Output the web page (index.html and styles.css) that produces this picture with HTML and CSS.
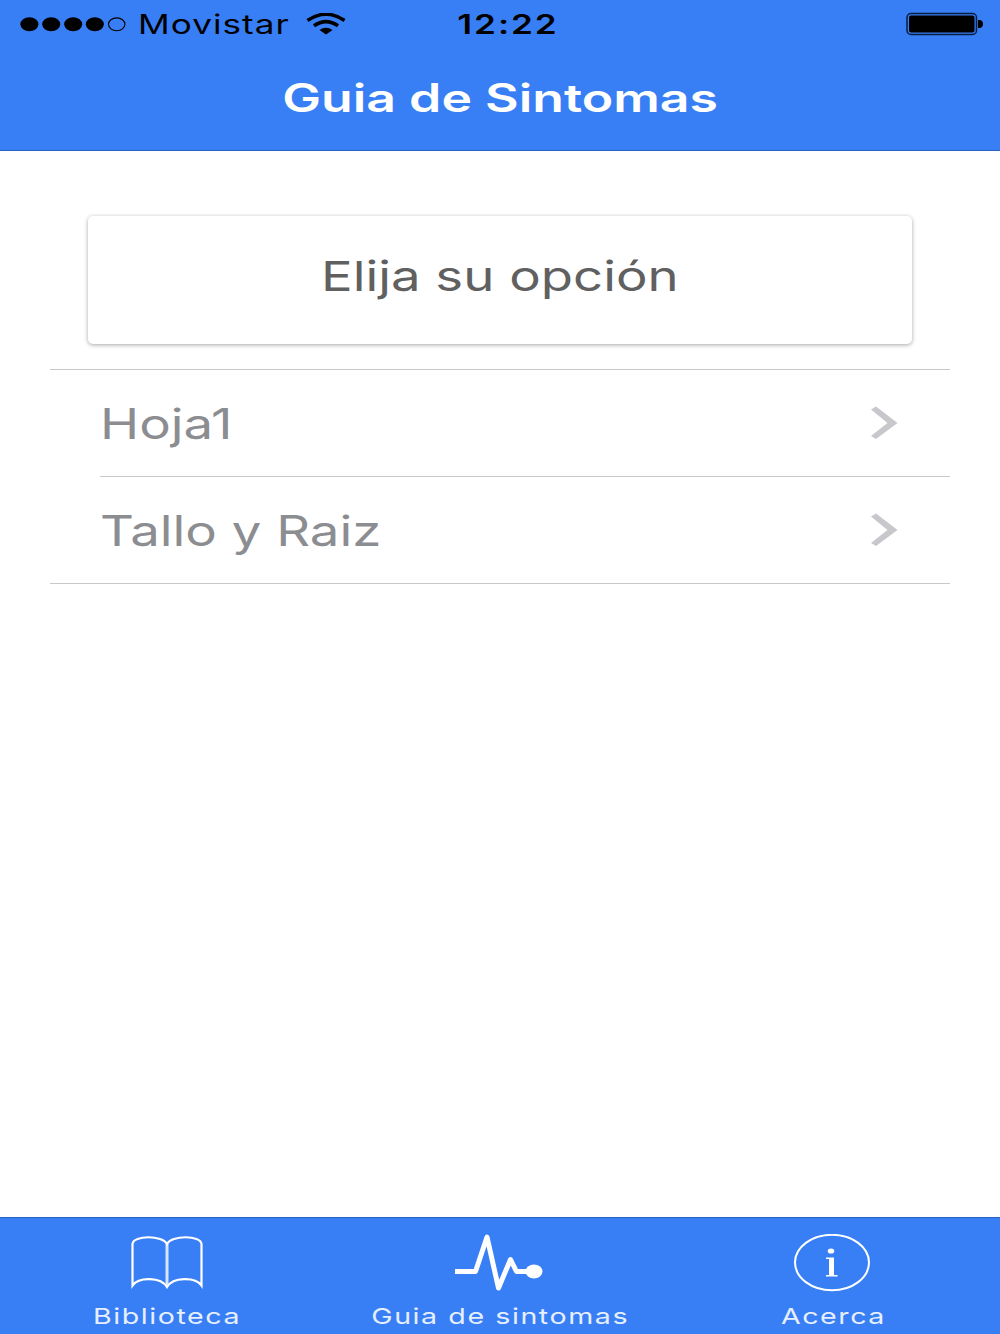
FILE: index.html
```html
<!DOCTYPE html>
<html lang="es">
<head>
    <meta charset="UTF-8">
    <meta name="viewport" content="width=device-width, initial-scale=1.0">
    <title>Guia de Sintomas</title>
    <link rel="stylesheet" href="styles.css">
</head>
<body>
    <header class="header">
        <div class="status-bar">
            <div class="status-left">
                <svg class="signal" width="106" height="16" viewBox="0 0 106 16">
                    <ellipse cx="9.400" cy="8.300" rx="9" ry="7"/>
                    <ellipse cx="31.200" cy="8.300" rx="9" ry="7"/>
                    <ellipse cx="53.200" cy="8.300" rx="9" ry="7"/>
                    <ellipse cx="74.800" cy="8.300" rx="9" ry="7"/>
                    <ellipse cx="96.700" cy="8.300" rx="8.200" ry="6.400" fill="none" stroke="#000" stroke-width="1.100"/>
                </svg>
                <span class="carrier"><span class="wide">Movistar</span></span>
                <svg class="wifi" width="40" height="22" viewBox="0 0 40 22">
                    <path d="M1.500 7.500Q20 -5 38.500 7.500M8 12.800Q20 4.500 32 12.800" fill="none" stroke="#000" stroke-width="3.600"/>
                    <path d="M13.500 17Q20 12.500 26.500 17L20 21.500Z"/>
                </svg>
            </div>
            <div class="clock"><span class="wide">12:22</span></div>
            <svg class="battery" width="78" height="24" viewBox="0 0 78 24">
                <rect x="1" y="1.500" width="69.500" height="21" rx="4" fill="none" stroke="#0b1d3d" stroke-width="1.500"/>
                <rect x="3" y="3.500" width="65.500" height="17" rx="2"/>
                <path d="M72 8h1.500c2 0 3.500 1.500 3.500 4s-1.500 4-3.500 4H72z"/>
            </svg>
        </div>
        <h1 class="title"><span class="wide">Guia de Sintomas</span></h1>
    </header>

    <main class="content">
        <div class="card"><span class="wide">Elija su opción</span></div>
        <ul class="list">
            <li class="item">
                <span class="wide">Hoja1</span>
                <svg class="arrow" width="28" height="34" viewBox="0 0 28 34">
                    <path d="M1 3.500L6 0.500L27.500 17L6 33L1 30L17.500 17Z"/>
                </svg>
            </li>
            <li class="item">
                <span class="wide">Tallo y Raiz</span>
                <svg class="arrow" width="28" height="34" viewBox="0 0 28 34">
                    <path d="M1 3.500L6 0.500L27.500 17L6 33L1 30L17.500 17Z"/>
                </svg>
            </li>
        </ul>
    </main>

    <nav class="tabs">
        <a class="tab">
            <span class="icon">
                <svg class="book" width="72" height="54" viewBox="0 0 72 54">
                    <path d="M36 8C32 -1 2 -1 1.500 8V49.500C8 40.500 30 41 36 51C42 41 64 40.500 70.500 49.500V8C70 -1 40 -1 36 8Z" fill="none" stroke="#fff" stroke-width="2.200"/>
                    <path d="M36 8V51" stroke="#fff" stroke-width="3" opacity=".8"/>
                </svg>
            </span>
            <span class="wide">Biblioteca</span>
        </a>
        <a class="tab">
            <span class="icon">
                <svg class="pulse" width="88" height="58" viewBox="0 0 88 58">
                    <path d="M0 37.500H20.500L32 3L43.500 54L55.500 25.500L61.500 37.500H78" fill="none" stroke="#fff" stroke-width="5" stroke-linejoin="round"/>
                    <ellipse cx="79" cy="37.500" rx="8.500" ry="7" fill="#fff"/>
                </svg>
            </span>
            <span class="wide">Guia de sintomas</span>
        </a>
        <a class="tab">
            <span class="icon">
                <svg class="info" width="76" height="58" viewBox="0 0 76 58">
                    <ellipse cx="38" cy="28.500" rx="37" ry="27.700" fill="none" stroke="#fff" stroke-width="2"/>
                    <ellipse cx="37" cy="17" rx="3.300" ry="2.600" fill="#fff"/>
                    <path d="M32 23.500H40V41H43.500V42.500H32V41H35V25H32Z" fill="#fff"/>
                </svg>
            </span>
            <span class="wide">Acerca</span>
        </a>
    </nav>
</body>
</html>
```

FILE: styles.css
```css
* {
    box-sizing: border-box;
}
body {
    margin: 0;
    height: 1334px;
    display: flex;
    flex-direction: column;
    background-color: #fff;
    font-family: Inter, "Liberation Sans", sans-serif;
}
svg {
    display: block;
    flex: none;
}
/* the letters are drawn wider than they are tall */
.wide {
    display: inline-block;
    white-space: nowrap;
    transform: scaleX(1.3);
}
.header {
    height: 151px;
    background-color: #387ef5;
    border-bottom: 1px solid #2a62c4;
}
.status-bar {
    height: 48px;
    padding: 0 16px 0 20px;
    display: grid;
    grid-template-columns: 1fr 100px 1fr;
    align-items: center;
    font-size: 27px;
}
.status-left {
    display: flex;
    align-items: center;
}
.carrier {
    width: 150px;
    margin: 0 18px 0 12px;
    letter-spacing: 0.8px;
}
.carrier .wide {
    transform-origin: left;
}
.clock {
    display: flex;
    justify-content: center;
    padding-left: 12px;
    font-weight: 600;
    letter-spacing: 1.5px;
}
.battery {
    justify-self: end;
}
.title {
    margin: 0;
    height: 100px;
    line-height: 100px;
    text-align: center;
    color: #fff;
    font-size: 39px;
    font-weight: 600;
}
.title .wide {
    transform: scaleX(1.327);
}
.content {
    flex: 1;
    padding: 65px 50px 0;
}
.card {
    height: 128px;
    margin: 0 38px;
    border-radius: 5px;
    box-shadow: 0 1px 4px rgba(0, 0, 0, 0.35);
    color: #606060;
    font-size: 41.5px;
    line-height: 120px;
    text-align: center;
}
.card .wide {
    transform: scaleX(1.27);
}
.list {
    list-style: none;
    margin: 25px 0 0;
    padding: 0;
    border-top: 1px solid #c9c9cb;
    border-bottom: 1px solid #c9c9cb;
}
.item {
    height: 106px;
    margin-left: 50px;
    padding-right: 52px;
    display: flex;
    align-items: center;
    justify-content: space-between;
    color: #8c8d91;
    font-size: 42px;
}
.item + .item {
    height: 107px;
    border-top: 1px solid #c9c9cb;
}
.item .wide {
    transform: scaleX(1.255);
    transform-origin: left;
}
.arrow {
    fill: #c7c7cc;
}
.tabs {
    height: 117px;
    border-top: 1px solid #2a62c4;
    background-color: #387ef5;
    display: grid;
    grid-template-columns: repeat(3, 1fr);
    color: #e6effe;
    font-size: 22px;
    line-height: 26px;
    letter-spacing: 1.2px;
}
.tab {
    display: flex;
    flex-direction: column;
    align-items: center;
    padding-top: 16px;
}
.icon {
    height: 69px;
}
.book {
    margin-top: 2px;
}
.pulse, .info {
    margin-right: 2px;
}
```
